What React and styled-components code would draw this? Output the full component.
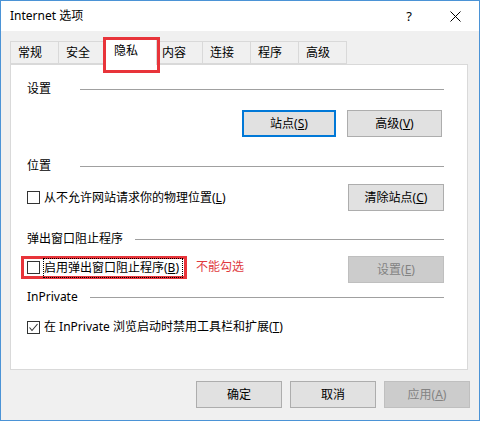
import React from 'react';
import styled, { createGlobalStyle } from 'styled-components';

const FONT = `"Noto Sans", "Noto Sans CJK SC", sans-serif`;

const GlobalStyle = createGlobalStyle`
  body {
    margin: 0;
    background: #ffffff;
    font-family: ${FONT};
    font-size: 12px;
    line-height: 16px;
    color: #000;
  }
`;

const Window = styled.div`
  width: 480px;
  height: 421px;
  box-sizing: border-box;
  border: 1px solid #4b93d6;
  background: #f0f0f0;
  display: flex;
  flex-direction: column;
`;

const TitleBar = styled.div`
  height: 30px;
  flex-shrink: 0;
  background: #ffffff;
  display: flex;
  align-items: center;
  padding-left: 9px;
`;

const Title = styled.span`
  flex: 1;
  font-size: 12px;
`;

const ControlButton = styled.div`
  width: 46px;
  height: 30px;
  display: flex;
  align-items: center;
  justify-content: center;
  font-size: 13px;
  margin-right: ${p => p.$mr || 0}px;
`;

const Body = styled.div`
  padding: 10px 0 0 9px;
  display: flex;
  flex-direction: column;
`;

const TabStrip = styled.div`
  display: flex;
  align-items: flex-end;
  height: 23px;
`;

const Tab = styled.div`
  position: relative;
  box-sizing: border-box;
  width: ${p => (p.$active ? 53 : 49)}px;
  height: ${p => (p.$active ? 27 : 23)}px;
  margin: ${p => (p.$active ? '0 -2px -1px -3px' : '0 0 0 -1px')};
  &:first-child {
    margin-left: 0;
  }
  padding: ${p => (p.$active ? '4px 0 0 9px' : '3px 0 0 7px')};
  border: 1px solid #d9d9d9;
  border-bottom: ${p => (p.$active ? 'none' : '1px solid #d9d9d9')};
  background: ${p => (p.$active ? '#ffffff' : '#f0f0f0')};
  z-index: ${p => (p.$active ? 1 : 0)};
  white-space: nowrap;

  ${p =>
    p.$marked &&
    `&::after {
      content: '';
      position: absolute;
      top: -2px;
      left: -2px;
      right: -4px;
      bottom: -8px;
      border: 3px solid #e8343a;
      pointer-events: none;
    }`}
`;

const Panel = styled.div`
  width: 458px;
  height: 306px;
  box-sizing: border-box;
  border: 1px solid #d9d9d9;
  background: #ffffff;
  padding: 0 23px 0 16px;
  display: flex;
  flex-direction: column;
`;

const GroupHeader = styled.div`
  display: flex;
  align-items: center;
  height: 20px;
  margin-top: ${p => p.$mt}px;
`;

const GroupTitle = styled.span`
  min-width: 53px;
  box-sizing: border-box;
  padding-right: 12px;
  white-space: nowrap;
`;

const GroupRule = styled.div`
  flex: 1;
  height: 1px;
  background: #a0a0a0;
`;

const Row = styled.div`
  display: flex;
  align-items: ${p => p.$align || 'center'};
  justify-content: ${p => p.$justify || 'space-between'};
  height: ${p => p.$h}px;
  margin-top: ${p => p.$mt}px;
  gap: ${p => p.$gap || 0}px;
  padding-right: ${p => p.$pr || 0}px;
`;

const Button = styled.button`
  width: ${p => p.$w || 94}px;
  height: 27px;
  box-sizing: border-box;
  padding: 0;
  font-family: ${FONT};
  font-size: 12px;
  line-height: 16px;
  border: ${p => (p.$focused ? '2px solid #0078d7' : '1px solid #adadad')};
  background: #e1e1e1;
  color: #000;

  &:disabled {
    background: #cccccc;
    border-color: #bfbfbf;
    color: #838383;
  }
`;

const CheckItem = styled.label`
  display: inline-flex;
  align-items: center;
  white-space: nowrap;
`;

const Box = styled.span`
  width: 13px;
  height: 13px;
  box-sizing: border-box;
  border: 1px solid #333333;
  background: #ffffff;
  display: inline-flex;
  align-items: center;
  justify-content: center;
  margin-right: 3px;
`;

const CheckText = styled.span`
  box-sizing: border-box;
  border: 1px ${p => (p.$focused ? 'dotted #000' : 'solid transparent')};
  padding: 1px ${p => (p.$focused ? 3 : 1)}px 1px 0;
`;

const Annotated = styled.div`
  display: inline-flex;
  align-items: center;
  height: 23px;
  box-sizing: border-box;
  border: 3px solid #e8343a;
  margin-left: -6px;
  padding-left: 3px;
  padding-right: 1px;
`;

const Warning = styled.span`
  color: #e0393e;
  margin-left: 9px;
  margin-top: 3px;
  white-space: nowrap;
`;

const Left = styled.div`
  display: flex;
  align-items: flex-start;
`;

const Footer = styled.div`
  display: flex;
  justify-content: flex-end;
  gap: 8px;
  margin-top: 11px;
  padding-right: 9px;
`;

function CloseIcon() {
  return (
    <svg width="11" height="11" viewBox="0 0 11 11">
      <path d="M0.5 0.5 L10.5 10.5 M10.5 0.5 L0.5 10.5" stroke="#000" strokeWidth="1" />
    </svg>
  );
}

function Checkbox({ checked, focused, children }) {
  return (
    <CheckItem>
      <Box>
        {checked && (
          <svg width="11" height="11" viewBox="0 0 11 11">
            <polyline points="1.5,5.5 4,8.5 9.5,2" fill="none" stroke="#333" strokeWidth="1.1" />
          </svg>
        )}
      </Box>
      <CheckText $focused={focused}>{children}</CheckText>
    </CheckItem>
  );
}

function Group({ title, mt }) {
  return (
    <GroupHeader $mt={mt}>
      <GroupTitle>{title}</GroupTitle>
      <GroupRule />
    </GroupHeader>
  );
}

const tabs = ['常规', '安全', '隐私', '内容', '连接', '程序', '高级'];

export default function App() {
  return (
    <>
      <GlobalStyle />
      <Window>
        <TitleBar>
          <Title>Internet 选项</Title>
          <ControlButton>?</ControlButton>
          <ControlButton $mr={1}>
            <CloseIcon />
          </ControlButton>
        </TitleBar>
        <Body>
          <TabStrip>
            {tabs.map(t => (
              <Tab key={t} $active={t === '隐私'} $marked={t === '隐私'}>
                {t}
              </Tab>
            ))}
          </TabStrip>
          <Panel>
            <Group title="设置" mt={14} />
            <Row $h={27} $mt={11} $justify="flex-end" $gap={11} $pr={2}>
              <Button $focused>
                站点(<u>S</u>)
              </Button>
              <Button $w={95}>
                高级(<u>V</u>)
              </Button>
            </Row>

            <Group title="位置" mt={19} />
            <Row $h={27} $mt={8}>
              <Checkbox>
                从不允许网站请求你的物理位置(<u>L</u>)
              </Checkbox>
              <Button $w={96}>
                清除站点(<u>C</u>)
              </Button>
            </Row>

            <Group title="弹出窗口阻止程序" mt={18} />
            <Row $h={28} $mt={7} $align="flex-start">
              <Left>
                <Annotated>
                  <Checkbox focused>
                    启用弹出窗口阻止程序(<u>B</u>)
                  </Checkbox>
                </Annotated>
                <Warning>不能勾选</Warning>
              </Left>
              <Button $w={96} disabled>
                设置(<u>E</u>)
              </Button>
            </Row>

            <Group title="InPrivate" mt={3} />
            <Row $h={20} $mt={10} $justify="flex-start">
              <Checkbox checked>
                在 InPrivate 浏览启动时禁用工具栏和扩展(<u>T</u>)
              </Checkbox>
            </Row>
          </Panel>
          <Footer>
            <Button $w={86}>确定</Button>
            <Button $w={86}>取消</Button>
            <Button $w={86} disabled>
              应用(<u>A</u>)
            </Button>
          </Footer>
        </Body>
      </Window>
    </>
  );
}
